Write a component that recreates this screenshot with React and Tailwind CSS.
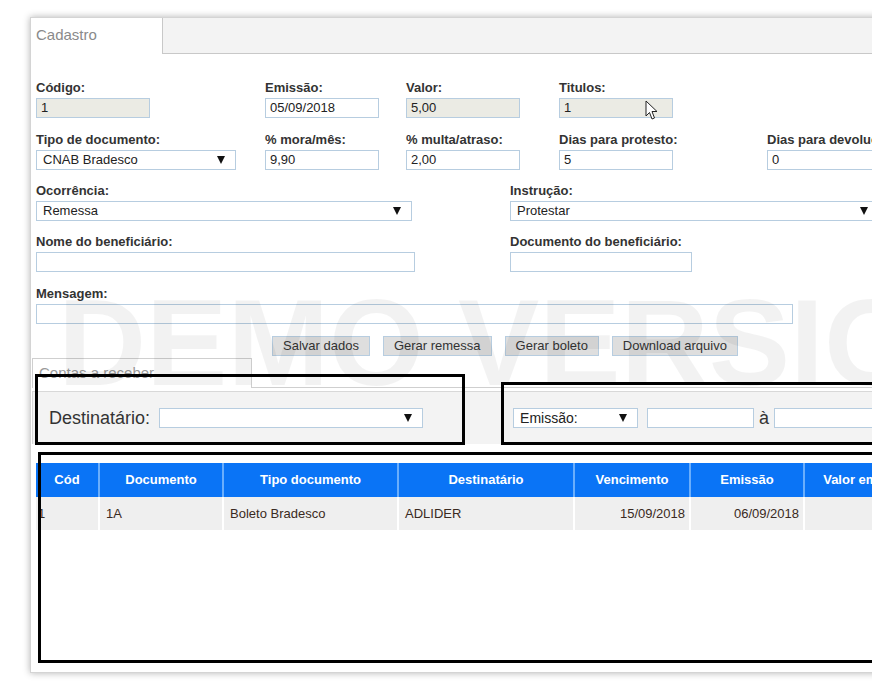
import React from "react";

const Label = ({ children }) => (
  <div className="text-[13px] leading-[16px] font-bold text-[#333] mb-[2px] whitespace-nowrap">{children}</div>
);

const Input = ({ value = "", width, disabled }) => (
  <div
    className={`h-[20px] border border-[#b7cde0] px-[4px] text-[13px] leading-[18px] text-[#222] whitespace-nowrap overflow-hidden ${
      disabled ? "bg-[#ebebe4]" : "bg-white"
    }`}
    style={{ width }}
  >
    {value}
  </div>
);

const Arrow = () => (
  <svg width="8" height="8" viewBox="0 0 8 8" className="shrink-0">
    <path d="M0 0 L8 0 L4 8 Z" fill="#111" />
  </svg>
);

const Select = ({ value = "", width, className = "" }) => (
  <div
    className={`h-[20px] border border-[#b7cde0] bg-white pl-[6px] pr-[10px] flex items-center justify-between text-[13px] text-[#222] whitespace-nowrap ${className}`}
    style={{ width }}
  >
    <span>{value}</span>
    <Arrow />
  </div>
);

const Field = ({ label, width, children }) => (
  <div className="shrink-0" style={{ width }}>
    <Label>{label}</Label>
    {children}
  </div>
);

const columns = [
  { name: "Cód", w: 62 },
  { name: "Documento", w: 124 },
  { name: "Tipo documento", w: 175 },
  { name: "Destinatário", w: 176 },
  { name: "Vencimento", w: 116 },
  { name: "Emissão", w: 114 },
  { name: "Valor emitido", w: 120 },
];

const row = [
  { v: "1", align: "text-left pl-[2px]" },
  { v: "1A", align: "text-left pl-[6px]" },
  { v: "Boleto Bradesco", align: "text-left pl-[6px]" },
  { v: "ADLIDER", align: "text-left pl-[6px]" },
  { v: "15/09/2018", align: "text-right pr-[4px]" },
  { v: "06/09/2018", align: "text-right pr-[4px]" },
  { v: "", align: "" },
];

export default function App() {
  return (
    <div className="relative w-[872px] h-[681px] overflow-hidden bg-white font-['Liberation_Sans',Arial,sans-serif]">
      {/* main panel */}
      <div className="ml-[30px] mt-[17px] w-[900px] h-[656px] border border-[#d4d4d4] bg-white shadow-[0_0_7px_rgba(0,0,0,0.3)]">
        {/* tabs */}
        <div className="flex h-[36px]">
          <div className="w-[131px] pl-[5px] pt-[6px] text-[15px] text-[#8a8a8a]">Cadastro</div>
          <div className="flex-1 bg-[#f3f3f3] border-l border-b border-[#c8c8c8]" />
        </div>

        {/* form */}
        <div className="pl-[5px] pt-[26px]">
          <div className="flex mb-[14px]">
            <Field label="Código:" width={229}>
              <Input value="1" width={114} disabled />
            </Field>
            <Field label="Emissão:" width={141}>
              <Input value="05/09/2018" width={114} />
            </Field>
            <Field label="Valor:" width={153}>
              <Input value="5,00" width={114} disabled />
            </Field>
            <Field label="Titulos:" width={208}>
              <Input value="1" width={114} disabled />
            </Field>
          </div>

          <div className="flex mb-[13px]">
            <Field label="Tipo de documento:" width={229}>
              <Select value="CNAB Bradesco" width={200} />
            </Field>
            <Field label="% mora/mês:" width={141}>
              <Input value="9,90" width={114} />
            </Field>
            <Field label="% multa/atraso:" width={153}>
              <Input value="2,00" width={114} />
            </Field>
            <Field label="Dias para protesto:" width={208}>
              <Input value="5" width={114} />
            </Field>
            <Field label="Dias para devolução:" width={140}>
              <Input value="0" width={130} />
            </Field>
          </div>

          <div className="flex mb-[13px]">
            <Field label="Ocorrência:" width={474}>
              <Select value="Remessa" width={376} />
            </Field>
            <Field label="Instrução:" width={380}>
              <Select value="Protestar" width={369} />
            </Field>
          </div>

          <div className="flex mb-[14px]">
            <Field label="Nome do beneficiário:" width={474}>
              <Input width={379} />
            </Field>
            <Field label="Documento do beneficiário:" width={200}>
              <Input width={182} />
            </Field>
          </div>

          <Field label="Mensagem:" width={757}>
            <Input width={757} />
          </Field>

          <div className="flex gap-[13px] ml-[236px] mt-[12px]">
            {["Salvar dados", "Gerar remessa", "Gerar boleto", "Download arquivo"].map((b) => (
              <div
                key={b}
                className="h-[20px] px-[10px] border border-[#b7cde0] bg-[#dedede] text-[13px] leading-[18px] text-[#333] whitespace-nowrap"
              >
                {b}
              </div>
            ))}
          </div>
        </div>

        {/* contas a receber */}
        <div className="ml-[1px] mt-[2px]">
          <div className="flex h-[30px]">
            <div className="w-[220px] border-l border-t border-r border-[#cfcfcf] pl-[6px] pt-[3px] text-[15px] text-[#9a9a9a]">
              Contas a receber
            </div>
            <div className="flex-1 border-b border-[#cfcfcf]" />
          </div>
          <div className="mt-[3px] h-[53px] border-t border-l border-[#d8d8d8] bg-[#f3f3f3] flex items-center">
            <span className="ml-[16px] text-[18px] text-[#333]">Destinatário:</span>
            <Select width={264} className="ml-[9px]" />
            <Select value="Emissão:" width={125} className="ml-[90px] text-[14px]" />
            <div className="ml-[9px] h-[20px] w-[107px] border border-[#b7cde0] bg-white" />
            <span className="ml-[5px] text-[18px] text-[#333]">à</span>
            <div className="ml-[5px] h-[20px] w-[120px] border border-[#b7cde0] bg-white" />
          </div>

          {/* table */}
          <div className="ml-[4px] mt-[19px]">
            <div className="flex h-[34px] bg-[#0a74f6]">
              {columns.map((c, i) => (
                <div
                  key={c.name}
                  className={`shrink-0 flex items-center justify-center text-[13px] font-bold text-white whitespace-nowrap ${
                    i > 0 ? "border-l-2 border-[#6aaefc]" : ""
                  }`}
                  style={{ width: c.w }}
                >
                  {c.name}
                </div>
              ))}
            </div>
            <div className="flex h-[33px] bg-[#efefef]">
              {row.map((c, i) => (
                <div
                  key={i}
                  className={`shrink-0 flex items-center text-[13px] text-[#3a2a22] whitespace-nowrap ${
                    c.align.startsWith("text-right") ? "justify-end" : ""
                  } ${c.align} ${i > 0 ? "border-l-2 border-white" : ""}`}
                  style={{ width: columns[i].w }}
                >
                  {c.v}
                </div>
              ))}
            </div>
          </div>
        </div>
      </div>

      {/* watermark */}
      <div className="pointer-events-none absolute left-[58px] top-[282px] text-[122px] font-bold leading-none text-black/[0.05] whitespace-nowrap">
        DEMO VERSION
      </div>

      {/* annotation boxes */}
      <div className="pointer-events-none absolute left-[35px] top-[374px] w-[430px] h-[71px] border-[3px] border-black" />
      <div className="pointer-events-none absolute left-[501px] top-[382px] w-[400px] h-[63px] border-[3px] border-black" />
      <div className="pointer-events-none absolute left-[38px] top-[452px] w-[860px] h-[211px] border-[3px] border-black" />

      {/* mouse cursor */}
      <svg className="pointer-events-none absolute left-[645px] top-[100px]" width="14" height="21" viewBox="0 0 14 21">
        <path d="M1 1 L1 16 L4.5 12.5 L7 19 L9.5 18 L7 11.5 L12 11.5 Z" fill="white" stroke="#222" strokeWidth="1" strokeLinejoin="round" />
      </svg>
    </div>
  );
}
